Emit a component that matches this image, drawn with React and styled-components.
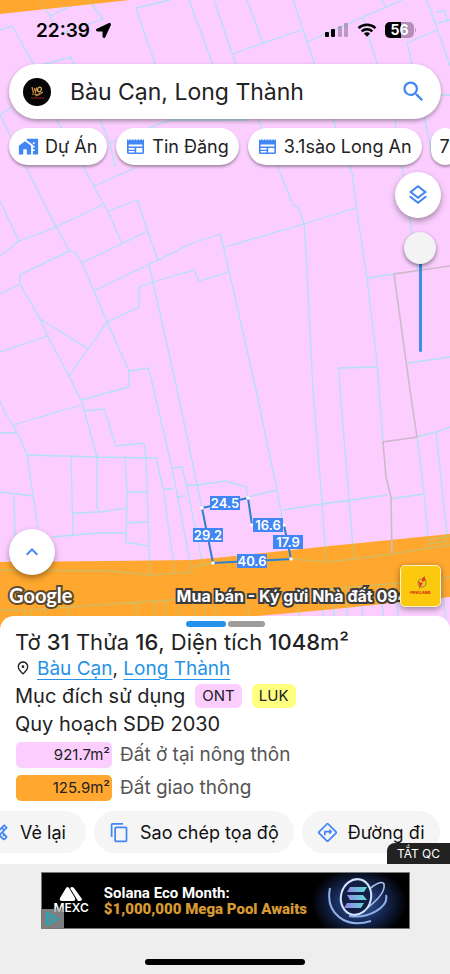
import { useState } from "react";
import styled, { createGlobalStyle } from "styled-components";
import {
  MdHomeWork,
  MdSearch,
  MdOutlineLayers,
  MdOutlinePlace,
  MdOutlineDirections,
  MdContentCopy,
  MdKeyboardArrowUp,
  MdOutlineDesignServices,
} from "react-icons/md";
import { FaLocationArrow } from "react-icons/fa";

const GlobalStyle = createGlobalStyle`
  * {
    box-sizing: border-box;
  }

  body {
    margin: 0;
    font-family: Inter, "Liberation Sans", sans-serif;
    color: #222;
  }

  button, input {
    font-family: inherit;
    color: inherit;
  }
`;

const Screen = styled.div`
  display: flex;
  flex-direction: column;
  min-height: 100vh;
  overflow: hidden;
  background: #eeeeee;
`;

const MapArea = styled.main`
  position: relative;
  display: flex;
  flex-direction: column;
  flex: 1;
  padding-bottom: 23px;
  background: #fbceff;
`;

const MapSvg = styled.svg`
  position: absolute;
  inset: 0;
  width: 100%;
  height: 100%;
`;

const Overlay = styled.div`
  position: relative;
  display: flex;
  flex-direction: column;
  flex: 1;
`;

const StatusBar = styled.div`
  display: flex;
  align-items: center;
  height: 64px;
  padding: 0 33px 4px 36px;
  color: #000;
`;

const Time = styled.span`
  margin-right: 6px;
  font-size: 19px;
  font-weight: 600;
`;

const StatusIcons = styled.div`
  display: flex;
  align-items: center;
  gap: 8px;
  margin-left: auto;
`;

const SearchBar = styled.form`
  display: flex;
  align-items: center;
  height: 55px;
  margin: 0 9px;
  padding: 0 14px;
  border-radius: 28px;
  background: #fff;
  box-shadow: 0 2px 4px rgba(0, 0, 0, 0.35);
`;

const SearchInput = styled.input`
  flex: 1;
  min-width: 0;
  margin-left: 19px;
  padding: 0;
  border: none;
  outline: none;
  background: none;
  font-size: 23px;
`;

const IconButton = styled.button`
  display: flex;
  padding: 0;
  border: none;
  background: none;
  color: #4285f4;
`;

const Chips = styled.div`
  display: flex;
  gap: 9px;
  margin-top: 5px;
  padding: 4px 0 7px 9px;
  overflow: hidden;
`;

const Chip = styled.button`
  display: flex;
  flex: none;
  align-items: center;
  gap: 6px;
  height: 37px;
  padding: 0 10px 0 9px;
  border: none;
  border-radius: 19px;
  background: #fff;
  box-shadow: 0 2px 3px rgba(0, 0, 0, 0.35);
  font-size: 18px;
  white-space: nowrap;

  svg {
    color: #4285f4;
  }
`;

const Controls = styled.div`
  display: flex;
  flex-direction: column;
  align-items: flex-end;
  gap: 14px;
  padding: 0 9px;
`;

const Fab = styled.button`
  display: flex;
  flex: none;
  align-items: center;
  justify-content: center;
  width: 46px;
  height: 46px;
  padding: 0;
  border: none;
  border-radius: 50%;
  background: #fff;
  color: #4285f4;
  box-shadow: 0 3px 6px rgba(0, 0, 0, 0.35);
`;

const Opacity = styled.input`
  appearance: none;
  writing-mode: vertical-lr;
  direction: rtl;
  width: 32px;
  height: 120px;
  margin: 0 5px 0 0;
  background: none;

  &::-webkit-slider-runnable-track {
    width: 3px;
    height: 100%;
    border-radius: 2px;
    background: #3f8ee0;
  }

  &::-webkit-slider-thumb {
    appearance: none;
    width: 32px;
    height: 32px;
    margin-left: -15px;
    border-radius: 50%;
    background: #f3f3f3;
    box-shadow: 0 2px 4px rgba(0, 0, 0, 0.45);
  }
`;

const MapFooter = styled.div`
  display: grid;
  grid-template-columns: 3fr 4fr 41px;
  align-items: end;
  margin-top: auto;
  padding: 0 9px;
`;

const Corner = styled.div`
  display: flex;
  flex-direction: column;
  gap: 8px;
`;

const Attribution = styled.span`
  font-family: Lato, sans-serif;
  font-size: 20px;
  line-height: 24px;
  font-weight: 700;
  color: #fff;
  -webkit-text-stroke: 4px #5d4a2e;
  paint-order: stroke fill;
`;

const Ticker = styled.div`
  min-width: 0;
  font-size: 16px;
  line-height: 22px;
  font-weight: 700;
  color: #fff;
  white-space: nowrap;
  -webkit-text-stroke: 4px #3c3c3c;
  paint-order: stroke fill;
`;

const BrandButton = styled.button`
  position: relative;
  width: 41px;
  height: 42px;
  padding: 0;
  border: 1px solid #fff3c4;
  border-radius: 5px;
  background: #fdc90f;
  box-shadow: 0 2px 6px rgba(0, 0, 0, 0.4);
`;

const Sheet = styled.section`
  position: relative;
  padding: 5px 0 11px;
  border-radius: 14px 14px 0 0;
  margin-top: -14px;
  background: #fff;
`;

const Pages = styled.div`
  display: flex;
  justify-content: center;
  gap: 2px;
`;

const Page = styled.span`
  width: ${(props) => (props.$active ? "40px" : "37px")};
  height: 6px;
  border-radius: 3px;
  background: ${(props) => (props.$active ? "#2492eb" : "#9e9e9e")};
`;

const Info = styled.div`
  padding: 3px 15px 0;
`;

const Title = styled.h1`
  margin: 0;
  font-size: 22px;
  line-height: 24px;
  font-weight: 400;

  b {
    font-weight: 500;
  }
`;

const Line = styled.div`
  display: flex;
  align-items: center;
  height: 28px;
  font-size: 20px;
`;

const Address = styled.span`
  margin-left: 6px;
  font-size: 19px;
`;

const Link = styled.a`
  color: #2492eb;
  text-underline-offset: 4px;
  text-decoration-thickness: 1px;
`;

const Badge = styled.span`
  margin-left: 10px;
  padding: 0 7px;
  border-radius: 6px;
  background: ${(props) => props.$color};
  font-size: 15px;
  line-height: 24px;
`;

const Uses = styled.ul`
  display: flex;
  flex-direction: column;
  gap: 7px;
  margin: 4px 0 10px;
  padding: 0 1px;
  list-style: none;
`;

const Use = styled.li`
  display: flex;
  align-items: center;
  gap: 8px;
  font-size: 19px;
  line-height: 26px;
  color: #555;
`;

const Area = styled.span`
  width: 96px;
  padding-right: 2px;
  border-radius: 5px;
  background: ${(props) => props.$color};
  color: #222;
  font-size: 15px;
  text-align: right;
`;

const Actions = styled.div`
  display: flex;
  gap: 8px;
  margin-left: -26px;
`;

const Action = styled.button`
  display: flex;
  flex: none;
  align-items: center;
  gap: 10px;
  min-width: 112px;
  height: 42px;
  padding: 0 15px;
  border: none;
  border-radius: 21px;
  background: #f5f5f5;
  color: #111;
  font-size: 18px;
  white-space: nowrap;

  svg {
    color: #4285f4;
  }
`;

const CloseAd = styled.button`
  position: absolute;
  right: 0;
  bottom: 0;
  height: 21px;
  padding: 0 10px;
  border: none;
  border-radius: 8px 0 0 0;
  background: #222;
  color: #fff;
  font-size: 12px;
`;

const AdArea = styled.footer`
  display: flex;
  flex-direction: column;
  align-items: center;
  height: 110px;
  padding: 8px 20px 9px;
`;

const Ad = styled.a`
  position: relative;
  display: flex;
  align-items: center;
  width: 100%;
  max-width: 369px;
  height: 57px;
  padding-left: 12px;
  border: 1px solid #777;
  background: #000;
  text-decoration: none;
  overflow: hidden;
`;

const Mexc = styled.div`
  display: flex;
  flex-direction: column;
  align-items: center;
  width: 36px;
  margin-right: 15px;
  color: #fff;
  font-size: 12px;
  line-height: 14px;
  font-weight: 600;
`;

const AdText = styled.div`
  font-family: Roboto, sans-serif;
  font-size: 15px;
  line-height: 16px;
  font-weight: 700;
  color: #fff;
  white-space: nowrap;

  b {
    display: block;
    color: #d79a33;
  }
`;

const AdArt = styled.svg`
  flex: none;
  margin-left: auto;
`;

const AdChoices = styled.svg`
  position: absolute;
  left: 0;
  bottom: 0;
`;

const HomeIndicator = styled.div`
  width: 160px;
  height: 6px;
  margin-top: auto;
  border-radius: 3px;
  background: #000;
`;

const parcels = [
  "M40 0L50 16L82 1M50 16L55 27M89 0L103 19L60 34M0 30L12 26L38 72M33 67L71 57L76 70",
  "M170 0L136 8L156 66M189 0L215 70M214 0L232 54L301 30M232 54L258 120L277 165M247 0L263 43M293 0L315 66L333 120L349 165",
  "M307 42L402 0M382 0L385 6M363 18L378 66L395 120L402 165L417 270M427 0L450 66M407 43L437 30M407 43L425 120L432 155L450 155M437 23L450 20M436 12L445 11L447 20M441 95L450 95",
  "M12 107L0 115L25 165L56 227L62 237L69 251L76 253L82 263L94 291L107 322L129 371L129 387L81 400M38 72L57 120L82 165L103 203L108 212L122 243M76 70L100 120L110 143L170 120L248 120M110 143L115 167",
  "M0 201L19 241L0 256M19 241L56 227L104 204M94 186L135 168M109 211L137 200L148 232L158 260M82 263L148 231M94 291L158 260L190 244L220 234L225 253L256 390L277 490L283 523",
  "M149 265L153 282L175 380L202 508M225 273L199 281L194 270L153 282L139 287L139 307L107 322L69 376M69 251L20 275L20 284L40 319L47 335L69 376L82 402L97 457L97 507L99 512",
  "M40 319L87 348M0 294L20 284M0 352L47 336M129 371L148 368L152 382L172 468L192 572M0 401L5 413L13 425L17 433L24 447L27 455L33 495L38 528M0 433H17M13 425L81 405",
  "M83 411L104 409L116 446L144 443L146 458L150 575M27 455L97 457L156 458L163 488L175 573M71 457L73 535M125 458L127 493L126 542L148 546M73 513L100 512L127 508M127 492H146M126 523L147 522",
  "M52 537L97 533L126 533M0 492L33 496M14 496L15 537M172 468L182 467L188 492L203 566M163 489H173M176 497L185 496M187 485H198L225 481L246 487L248 497L277 490",
  "M277 165L293 205L298 207L304 223L306 252L313 390L322 503L326 562M225 247L304 224L355 208M349 165L352 173L357 212L367 278L377 362L379 390L383 442M367 278L394 274M408 363L450 357",
  "M354 560L349 499L340 390L339 368L377 367M225 273L229 271M283 510L322 504L388 495M390 499L424 494M417 437L424 494L429 548M417 437L436 432L450 427M436 432L448 543",
  "M0 570L110 571L150 575L192 572L192 567L213 563M292 559L327 562L354 559L392 554L429 548L450 545M429 540L450 536M429 544L448 541",
  "M0 610H25V630M31 630V610L68 607L155 601L225 597L400 583L450 577M45 609V630M68 607V630M137 602V630M155 601V630M165 600V630M179 600V630M195 599V630M205 599V630M215 598V630M247 595L250 630M298 591L300 630M322 589L324 630M334 588V630M347 587V630M360 586L364 630M380 585L385 630M395 583L399 630M441 578L447 630",
].join("");

const road =
  "M0 562L110 561L192 560L225 557L330 546L450 534V597L325 610L190 622L0 640Z";

const corners = [
  [202, 508],
  [248, 498],
  [252, 525],
  [284, 525],
  [291, 559],
  [213, 563],
];

const lengths = [
  { x: 225, y: 503, value: "24.5" },
  { x: 208, y: 535, value: "29.2" },
  { x: 268, y: 525, value: "16.6" },
  { x: 288, y: 542, value: "17.9" },
  { x: 252, y: 561, value: "40.6" },
];

function LandMap() {
  return (
    <MapSvg viewBox="0 0 450 630" preserveAspectRatio="xMidYMid slice">
      <clipPath id="road">
        <path d={road} />
      </clipPath>
      <path d={parcels} fill="none" stroke="#b2e0f5" strokeWidth="1.3" />
      <path d="M0 0H130L0 14Z" fill="#ffa72e" />
      <path d="M40 0L45 9M89 0L92 4" stroke="#d3bb60" />
      <path d={road} fill="#ffa72e" />
      <path
        d={parcels}
        fill="none"
        stroke="#d3bb60"
        strokeWidth="1.3"
        clipPath="url(#road)"
      />
      <path
        d="M450 266L394 274L410 390L417 437L383 442L386 477L391 497L392 553"
        fill="none"
        stroke="#cdb9c9"
        strokeWidth="1.6"
      />
      <polygon
        points={corners.join(" ")}
        fill="none"
        stroke="#2b80d2"
        strokeWidth="2"
      />
      {corners.map(([x, y]) => (
        <circle key={`${x}-${y}`} cx={x} cy={y} r="1.8" fill="#fff" />
      ))}
      {lengths.map((item) => (
        <g key={item.value}>
          <rect
            x={item.x - 15}
            y={item.y - 7}
            width="30"
            height="14"
            fill="#4285f4"
          />
          <text
            x={item.x}
            y={item.y + 5}
            fill="#fff"
            fontSize="13"
            fontWeight="600"
            textAnchor="middle"
          >
            {item.value}
          </text>
        </g>
      ))}
    </MapSvg>
  );
}

function Status() {
  return (
    <StatusBar>
      <Time>22:39</Time>
      <FaLocationArrow size={15} />
      <StatusIcons>
        <svg width="24" height="14" viewBox="0 0 24 14">
          <rect x="0" y="9" width="4" height="5" rx="1" />
          <rect x="6" y="6" width="4" height="8" rx="1" />
          <rect x="13" y="3" width="4" height="11" rx="1" opacity=".25" />
          <rect x="19" y="0" width="4" height="14" rx="1" opacity=".25" />
        </svg>
        <svg width="20" height="14" viewBox="0 0 20 14">
          <path
            d="M1.5 5.2A12.3 12.3 0 0 1 18.5 5.2M4.7 8.4A7.7 7.7 0 0 1 15.3 8.4"
            fill="none"
            stroke="#000"
            strokeWidth="2.5"
          />
          <path d="M6.9 10.6A4.4 4.4 0 0 1 13.1 10.6L10 13.8Z" />
        </svg>
        <svg width="32" height="16" viewBox="0 0 32 16">
          <rect width="29" height="16" rx="5" fill="#b48fb9" />
          <path d="M16 0V16H5A5 5 0 0 1 0 11V5A5 5 0 0 1 5 0Z" />
          <path d="M30 5.5Q32 8 30 10.5Z" fill="#b48fb9" />
          <text
            x="14.5"
            y="13"
            fill="#fff"
            fontSize="14"
            fontWeight="700"
            textAnchor="middle"
          >
            56
          </text>
        </svg>
      </StatusIcons>
    </StatusBar>
  );
}

function NewsIcon() {
  return (
    <svg width="21" height="21" viewBox="0 0 21 21" fill="currentColor">
      <path d="M2 3L3.400 4.400L4.800 3L6.200 4.400L7.600 3L9 4.400L10.500 3L12 4.400L13.400 3L14.800 4.400L16.200 3L17.600 4.400L19 3V7.500H2Z" />
      <path
        fillRule="evenodd"
        d="M2 7H19V16.500Q19 18 17.500 18H3.500Q2 18 2 16.500ZM3.600 8.500V10.600H17.400V8.500ZM3.600 12.100V13.700H9.600V12.100ZM3.600 15V16.400H9.600V15ZM11.200 12.100V16.400H17.400V12.100Z"
      />
    </svg>
  );
}

function Avatar() {
  return (
    <svg width="28" height="28" viewBox="0 0 28 28">
      <circle cx="14" cy="14" r="14" fill="#050505" />
      <path
        d="M9 9L10.5 15M11.5 10L12.5 14L14 9.5"
        fill="none"
        stroke="#c98f3c"
        strokeWidth="1.3"
      />
      <ellipse
        cx="16.5"
        cy="11.5"
        rx="1.8"
        ry="2.4"
        transform="rotate(20 16.5 11.5)"
        fill="none"
        stroke="#e0b566"
        strokeWidth="1.2"
      />
      <path
        d="M9 16Q14 18 20 14Q16 18 12 18"
        fill="none"
        stroke="#c98f3c"
        strokeWidth="1"
      />
      <path d="M8 20H21" stroke="#8c231c" strokeWidth="1" />
    </svg>
  );
}

function Brand() {
  return (
    <svg width="39" height="40" viewBox="0 0 39 40">
      <circle
        cx="21"
        cy="17"
        r="4"
        fill="none"
        stroke="#9b8a55"
        strokeWidth="1.2"
      />
      <path
        d="M15 12Q18 17 22 17L18 23Q20 18 15 12ZM21 16Q20 12 24 10Q23 12 25 14Z"
        fill="#e33a1c"
      />
      <text
        x="19.5"
        y="28"
        fill="#d92a1c"
        fontSize="4"
        fontWeight="800"
        textAnchor="middle"
      >
        PAVILAND
      </text>
    </svg>
  );
}

function Banner() {
  return (
    <Ad href="#ad">
      <Mexc>
        <svg width="24" height="15" viewBox="0 0 24 15">
          <path
            d="M1 12L7 2Q8.500 0 10 2L16 12Q17 15 14 15H3Q0 15 1 12ZM11 2Q13 0 15 2L23 13Q23 15 21 15H19Z"
            fill="#fff"
          />
        </svg>
        MEXC
      </Mexc>
      <AdText>
        Solana Eco Month:
        <b>$1,000,000 Mega Pool Awaits</b>
      </AdText>
      <AdArt width="102" height="56" viewBox="0 0 102 56">
        <defs>
          <radialGradient id="glow">
            <stop offset="0" stopColor="#3a62b0" />
            <stop offset=".55" stopColor="#152650" />
            <stop offset="1" stopColor="#000" />
          </radialGradient>
          <linearGradient id="coin">
            <stop offset="0" stopColor="#9a7cf0" />
            <stop offset="1" stopColor="#5fe0d0" />
          </linearGradient>
        </defs>
        <ellipse cx="52" cy="30" rx="48" ry="36" fill="url(#glow)" />
        <path
          d="M23 15C18 40 38 56 64 48M79 22C82 34 62 46 42 43"
          fill="none"
          stroke="#8fb0e8"
          strokeWidth="2"
        />
        <path
          d="M60 18Q74 6 77 11Q79 22 56 38"
          fill="none"
          stroke="#a9c4f0"
          strokeWidth="1.6"
        />
        <ellipse
          cx="49"
          cy="24"
          rx="15"
          ry="18"
          transform="rotate(14 49 24)"
          fill="#111f42"
          stroke="#d5e4ff"
          strokeWidth="2"
        />
        <path
          d="M43 14H60L57 19H40ZM40 22H56L60 27H43ZM40 30H57L54 35H37Z"
          fill="url(#coin)"
        />
      </AdArt>
      <AdChoices width="22" height="19" viewBox="0 0 22 19">
        <rect width="22" height="19" fill="#a8a8a8" opacity=".75" />
        <path
          d="M5 4V15.500L16 9.800ZM8 7V12"
          fill="none"
          stroke="#2aa5b5"
          strokeWidth="2"
          strokeLinejoin="round"
        />
      </AdChoices>
    </Ad>
  );
}

function App() {
  const [place, setPlace] = useState("Bàu Cạn, Long Thành");
  const [opacity, setOpacity] = useState(100);

  return (
    <Screen>
      <GlobalStyle />
      <MapArea>
        <LandMap />
        <Overlay>
          <Status />
          <SearchBar onSubmit={(e) => e.preventDefault()}>
            <Avatar />
            <SearchInput
              type="text"
              aria-label="Tìm kiếm"
              value={place}
              onChange={(e) => setPlace(e.target.value)}
            />
            <IconButton type="submit" aria-label="Tìm">
              <MdSearch size={27} />
            </IconButton>
          </SearchBar>
          <Chips>
            <Chip type="button">
              <MdHomeWork size={21} />
              Dự Án
            </Chip>
            <Chip type="button">
              <NewsIcon />
              Tin Đăng
            </Chip>
            <Chip type="button">
              <NewsIcon />
              3.1sào Long An
            </Chip>
            <Chip type="button">7</Chip>
          </Chips>
          <Controls>
            <Fab type="button" aria-label="Lớp bản đồ">
              <MdOutlineLayers size={24} />
            </Fab>
            <Opacity
              type="range"
              aria-label="Độ mờ"
              min="0"
              max="100"
              value={opacity}
              onChange={(e) => setOpacity(e.target.value)}
            />
          </Controls>
          <MapFooter>
            <Corner>
              <Fab type="button" aria-label="Mở rộng">
                <MdKeyboardArrowUp size={24} />
              </Fab>
              <Attribution>Google</Attribution>
            </Corner>
            <Ticker>Mua bán - Ký gửi Nhà đất 094</Ticker>
            <BrandButton type="button" aria-label="Paviland">
              <Brand />
            </BrandButton>
          </MapFooter>
        </Overlay>
      </MapArea>
      <Sheet>
        <Pages>
          <Page $active />
          <Page />
        </Pages>
        <Info>
          <Title>
            Tờ <b>31</b> Thửa <b>16</b>, Diện tích <b>1048</b>m²
          </Title>
          <Line>
            <MdOutlinePlace size={16} />
            <Address>
              <Link href="#bau-can">Bàu Cạn</Link>,{" "}
              <Link href="#long-thanh">Long Thành</Link>
            </Address>
          </Line>
          <Line>
            Mục đích sử dụng
            <Badge $color="#fbceff">ONT</Badge>
            <Badge $color="#ffff80">LUK</Badge>
          </Line>
          <Line>Quy hoạch SDĐ 2030</Line>
          <Uses>
            <Use>
              <Area $color="#fbceff">921.7m²</Area>
              Đất ở tại nông thôn
            </Use>
            <Use>
              <Area $color="#ffa72e">125.9m²</Area>
              Đất giao thông
            </Use>
          </Uses>
        </Info>
        <Actions>
          <Action type="button">
            <MdOutlineDesignServices size={21} />
            Vẻ lại
          </Action>
          <Action type="button">
            <MdContentCopy size={21} />
            Sao chép tọa độ
          </Action>
          <Action type="button">
            <MdOutlineDirections size={21} />
            Đường đi
          </Action>
        </Actions>
        <CloseAd type="button">TẮT QC</CloseAd>
      </Sheet>
      <AdArea>
        <Banner />
        <HomeIndicator />
      </AdArea>
    </Screen>
  );
}

export default App;
